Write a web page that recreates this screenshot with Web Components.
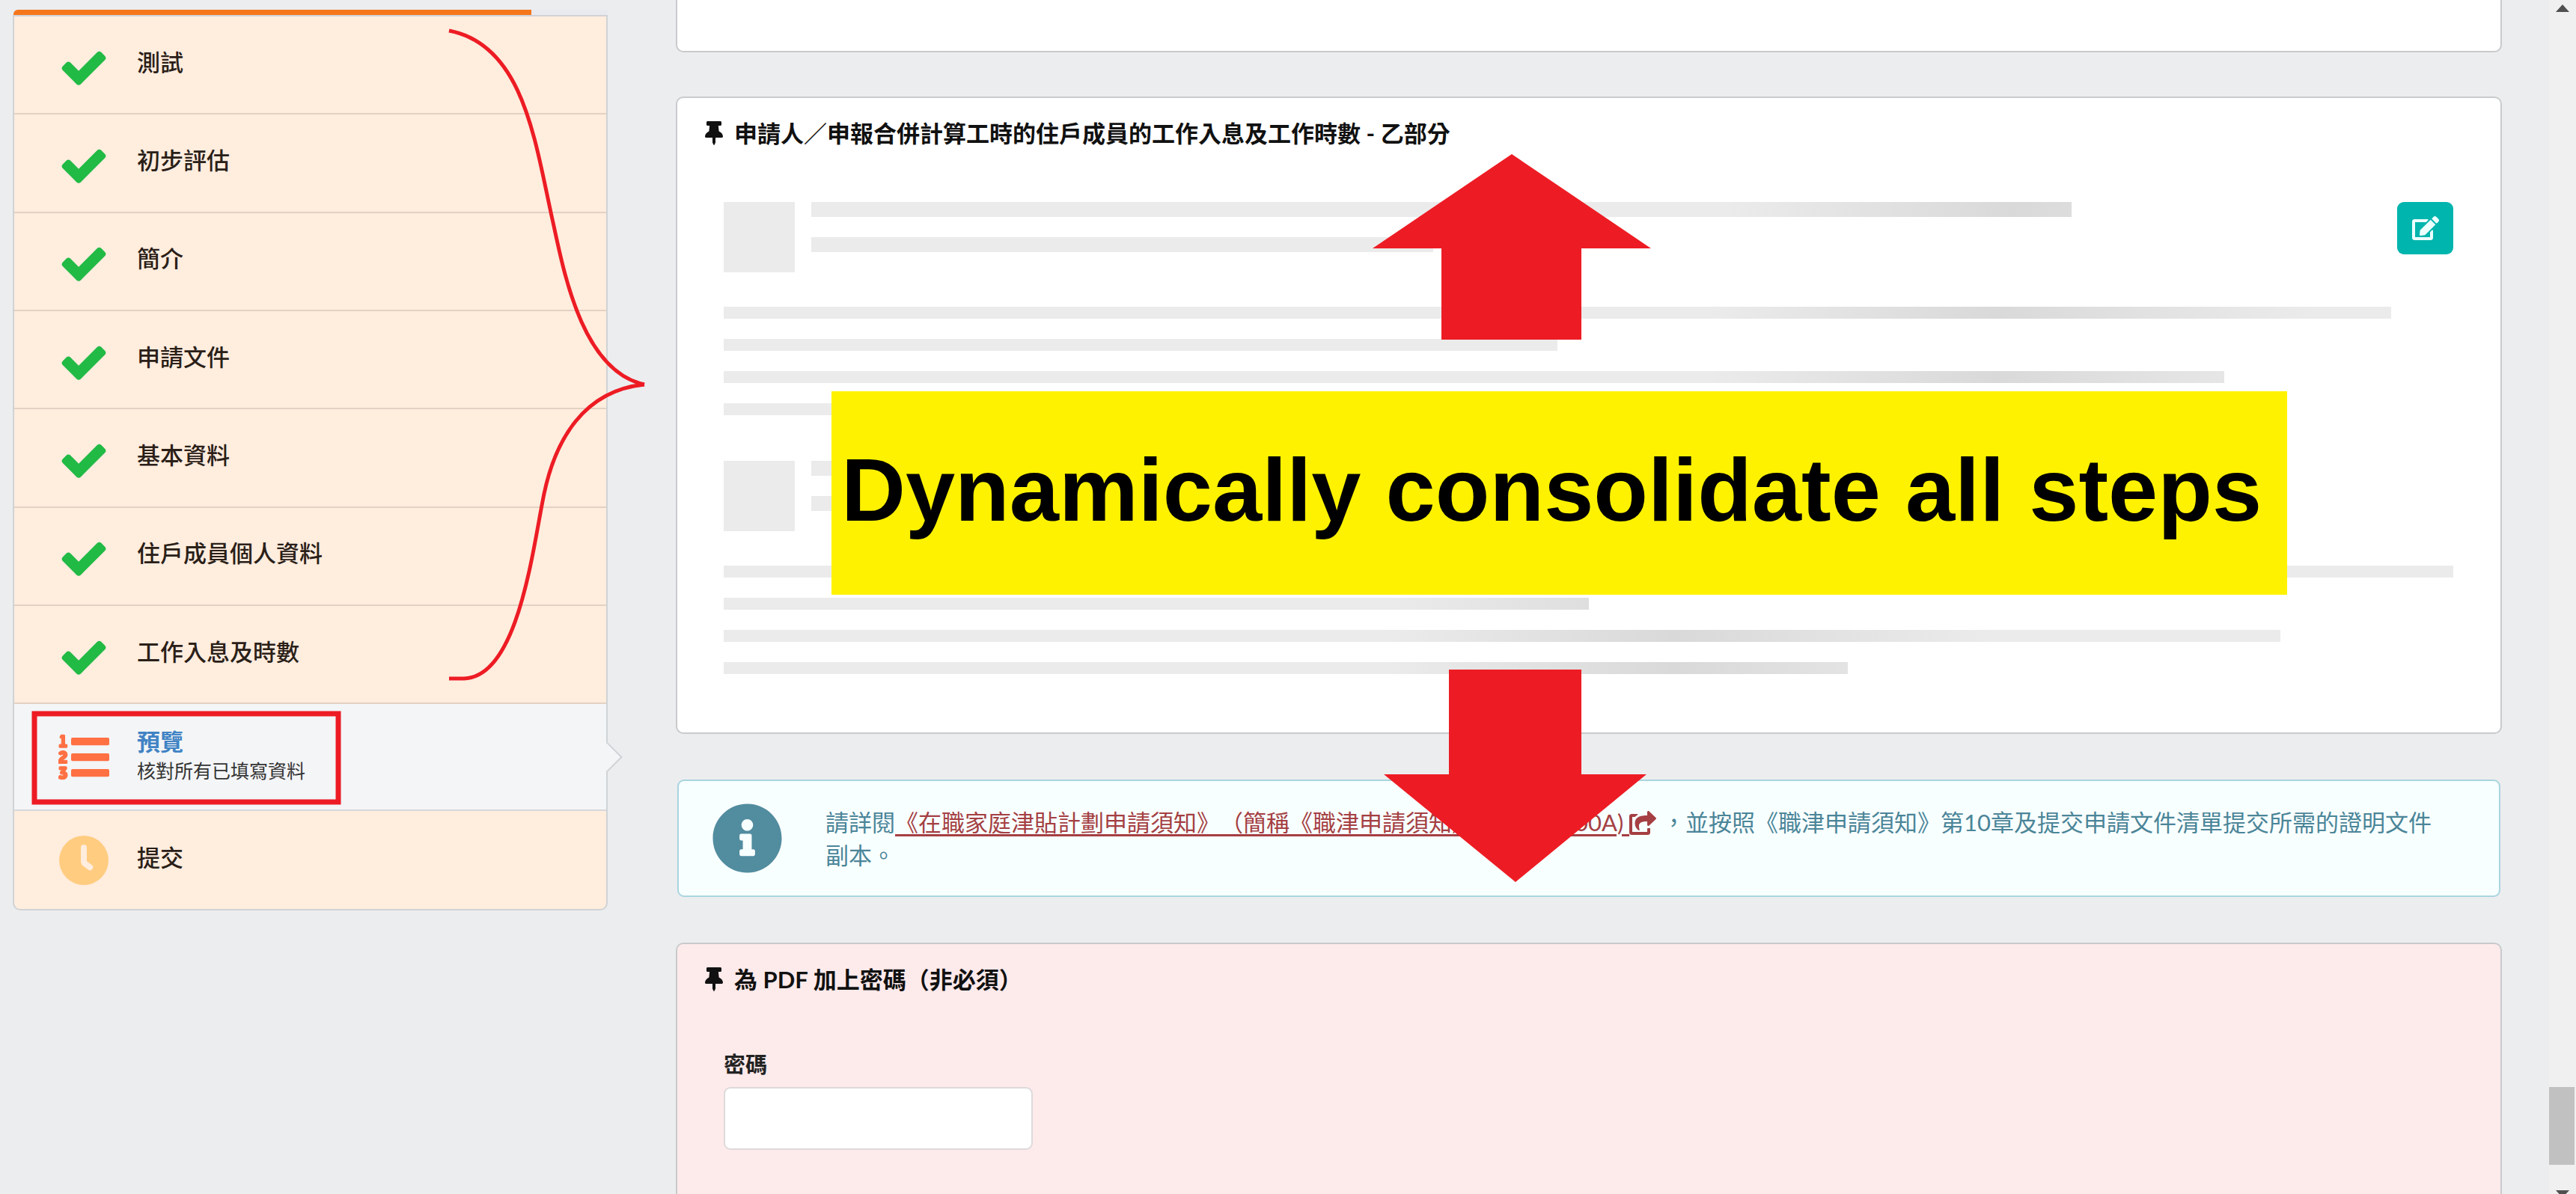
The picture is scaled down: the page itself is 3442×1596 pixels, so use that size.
<!DOCTYPE html>
<html lang="zh-Hant">
<head>
<meta charset="utf-8">
<title>預覽</title>
<style>
  body { margin: 0; background: #ecedef; color: #1b1c1d; font: 31px/44px Lato, "Noto Sans CJK TC", sans-serif; text-spacing-trim: space-all; }
</style>
</head>
<body>
<wfa-page>
  <wfa-progress slot="side"></wfa-progress>
  <wfa-steps slot="side">
    <wfa-step icon="check">測試</wfa-step>
    <wfa-step icon="check">初步評估</wfa-step>
    <wfa-step icon="check">簡介</wfa-step>
    <wfa-step icon="check">申請文件</wfa-step>
    <wfa-step icon="check">基本資料</wfa-step>
    <wfa-step icon="check">住戶成員個人資料</wfa-step>
    <wfa-step icon="check">工作入息及時數</wfa-step>
    <wfa-step icon="list" active>預覽<span slot="description">核對所有已填寫資料</span></wfa-step>
    <wfa-step icon="clock">提交</wfa-step>
  </wfa-steps>

  <wfa-card class="tail"></wfa-card>
  <wfa-card>
    <span slot="title">申請人／申報合併計算工時的住戶成員的工作入息及工作時數 - 乙部分</span>
    <wfa-row>
      <wfa-skeleton style="--glow: 1700px"></wfa-skeleton>
      <wfa-edit slot="action"></wfa-edit>
    </wfa-row>
    <wfa-skeleton style="--glow: 1270px"></wfa-skeleton>
  </wfa-card>
  <wfa-notice></wfa-notice>
  <wfa-card class="rose">
    <span slot="title">為 PDF 加上密碼（非必須）</span>
    <wfa-field></wfa-field>
  </wfa-card>

  <wfa-scrollbar slot="scroll"></wfa-scrollbar>
  <wfa-markup slot="overlay">Dynamically consolidate all steps</wfa-markup>
</wfa-page>

<script>
const ICONS = {
  check: ['0 0 1792 1792', '<path d="M1671 566q0 40-28 68l-724 724-136 136q-28 28-68 28t-68-28l-136-136-362-362q-28-28-28-68t28-68l136-136q28-28 68-28t68 28l294 295 656-657q28-28 68-28t68 28l136 136q28 28 28 68z"/>'],
  list: ['0 0 512 512', '<rect x="128" y="61" width="384" height="76" rx="14"/><rect x="128" y="219" width="384" height="76" rx="14"/><rect x="128" y="377" width="384" height="76" rx="14"/><path stroke="currentColor" stroke-width="8" d="M61.77 401l17.5-20.15a19.92 19.92 0 0 0 5.07-14.19v-3.31C84.34 356 80.5 352 73 352H16a8 8 0 0 0-8 8v16a8 8 0 0 0 8 8h22.83a157.41 157.41 0 0 0-11 12.31l-5.61 7c-4 5.07-5.25 10.13-2.8 14.88l1.05 1.93c3 5.76 6.29 7.88 12.25 7.88h4.73c10.33 0 15.94 2.44 15.94 9.09 0 4.72-4.2 8.22-14.36 8.22a41.54 41.54 0 0 1-15.47-3.12c-6.49-3.88-11.74-3.5-15.6 3.12l-5.59 9.31c-3.72 6.13-3.19 11.72 2.63 15.94 7.71 4.69 20.38 9.44 37 9.44 34.16 0 48.5-22.75 48.5-44.12-.03-14.38-9.12-29.76-28.73-34.88zM16 160h64a8 8 0 0 0 8-8v-16a8 8 0 0 0-8-8H64V40a8 8 0 0 0-8-8H32a8 8 0 0 0-7.14 4.42l-8 16A8 8 0 0 0 24 64h8v64H16a8 8 0 0 0-8 8v16a8 8 0 0 0 8 8zm-3.91 160H80a8 8 0 0 0 8-8v-16a8 8 0 0 0-8-8H41.32c3.29-10.29 48.34-18.68 48.34-56.44 0-29.06-25-39.56-44.47-39.56-21.36 0-33.8 10-40.46 18.75-4.37 5.59-3 10.84 2.8 15.37l8.58 6.88c5.61 4.56 11 2.47 16.12-2.44a13.44 13.44 0 0 1 9.46-3.84c3.33 0 9.28 1.56 9.28 8.75C51 248.19 0 257.31 0 304.59v4C0 316 5.08 320 12.09 320z"/>'],
  clock: ['0 0 512 512', '<circle cx="256" cy="256" r="248"/><path d="M256 128v136q0 16 12 26l50 36" fill="none" stroke="#ffedde" stroke-width="60" stroke-linecap="round" stroke-linejoin="round"/>'],
  pin: ['0 0 384 512', '<path d="M298.028 214.267L285.793 96H328c13.255 0 24-10.745 24-24V24c0-13.255-10.745-24-24-24H56C42.745 0 32 10.745 32 24v48c0 13.255 10.745 24 24 24h42.207L85.972 214.267C37.465 236.82 0 277.261 0 328c0 13.255 10.745 24 24 24h136v104.007c0 1.242.289 2.467.845 3.578l24 48c2.941 5.882 11.364 5.893 14.311 0l24-48a8.008 8.008 0 0 0 .845-3.578V352h136c13.255 0 24-10.745 24-24-.001-51.029-37.983-91.33-85.973-113.733z"/>'],
  edit: ['0 0 576 512', '<path d="M402.6 83.2l90.2 90.2c3.8 3.8 3.8 10 0 13.8L274.4 405.6l-92.8 10.3c-12.4 1.4-22.9-9.1-21.5-21.5l10.3-92.8L388.8 83.2c3.8-3.8 10-3.8 13.8 0zm162-22.9l-48.8-48.8c-15.2-15.2-39.9-15.2-55.2 0l-35.4 35.4c-3.8 3.8-3.8 10 0 13.8l90.2 90.2c3.8 3.8 10 3.8 13.8 0l35.4-35.4c15.2-15.3 15.2-40 0-55.2zM384 346.2V448H64V128h229.8c3.2 0 6.2-1.3 8.5-3.5l40-40c7.6-7.6 2.2-20.5-8.5-20.5H48C21.5 64 0 85.5 0 112v352c0 26.5 21.5 48 48 48h352c26.5 0 48-21.5 48-48V306.2c0-10.7-12.9-16-20.5-8.5l-40 40c-2.2 2.3-3.5 5.3-3.5 8.5z"/>'],
  info: ['0 0 512 512', '<path d="M256 8C119.043 8 8 119.083 8 256c0 136.997 111.043 248 248 248s248-111.003 248-248C504 119.083 392.957 8 256 8zm0 110c23.196 0 42 18.804 42 42s-18.804 42-42 42-42-18.804-42-42 18.804-42 42-42zm56 254c0 6.627-5.373 12-12 12h-88c-6.627 0-12-5.373-12-12v-24c0-6.627 5.373-12 12-12h12v-64h-12c-6.627 0-12-5.373-12-12v-24c0-6.627 5.373-12 12-12h64c6.627 0 12 5.373 12 12v100h12c6.627 0 12 5.373 12 12v24z"/>'],
  share: ['0 0 576 512', '<path d="M568.482 177.448L424.479 313.433C409.3 327.768 384 317.14 384 295.985v-71.963c-144.575.97-205.566 35.113-164.775 171.353 4.483 14.973-12.846 26.567-25.006 17.33C155.252 383.105 120 326.488 120 269.339c0-143.937 117.599-172.5 264-173.312V24.012c0-21.174 25.317-31.768 40.479-17.448l144.003 135.988c10.02 9.463 10.028 25.425 0 34.896zM384 379.128V448H64V128h50.916a11.99 11.99 0 0 0 8.648-3.693c14.953-15.568 32.237-27.89 51.014-37.676C185.708 80.83 181.584 64 169.033 64H48C21.49 64 0 85.49 0 112v352c0 26.51 21.49 48 48 48h352c26.51 0 48-21.49 48-48v-88.806c0-8.288-8.197-14.066-16.011-11.302a71.83 71.83 0 0 1-34.189 3.377c-7.27-1.046-13.8 4.514-13.8 11.859z"/>']
};
const icon = name => `<svg class="icon" viewBox="${ICONS[name][0]}" fill="currentColor" aria-hidden="true">${ICONS[name][1]}</svg>`;

function component(name, render) {
  customElements.define(name, class extends HTMLElement {
    constructor() {
      super();
      this.attachShadow({ mode: 'open' });
    }
    connectedCallback() {
      this.shadowRoot.innerHTML = '<style>*{box-sizing:border-box}.icon{display:block;flex:none}</style>' + render(this);
    }
  });
}

component('wfa-page', () => `
  <style>
    :host { display: flex; position: relative; height: 100vh; overflow: hidden; }
    .columns { flex: 1; min-width: 0; display: grid; grid-template-columns: minmax(0, 795fr) minmax(0, 2436fr); gap: 93px; padding: 0 65px 0 17px; }
    aside { padding-top: 13px; }
    main { display: flex; flex-direction: column; gap: 63px; }
  </style>
  <div class="columns">
    <aside><slot name="side"></slot></aside>
    <main><slot></slot></main>
  </div>
  <slot name="scroll"></slot>
  <slot name="overlay"></slot>`);

component('wfa-progress', () => `
  <style>
    :host { display: block; height: 7px; background: #e9eaf0; border-radius: 6px 0 0 0; }
    .bar { width: 87%; height: 100%; background: #f5761a; border-radius: 6px 0 0 0; margin-left: 1px; }
  </style>
  <div class="bar"></div>`);

component('wfa-steps', () => `
  <style>
    :host { display: grid; grid-template-rows: repeat(7, minmax(0, 921fr)) minmax(0, 1001fr) minmax(0, 917fr); height: 1197px;
      border: 2px solid #d0d3d6; border-radius: 0 0 10px 10px; background: #ffedde; box-sizing: border-box; }
  </style>
  <slot></slot>`);

component('wfa-step', host => `
  <style>
    :host { display: flex; position: relative; align-items: center; gap: 37px; padding-left: 59px; border-bottom: 2px solid #e3d2c3;
      box-sizing: border-box; font-weight: 500; line-height: 36px; color: #2a2018; }
    :host(:last-child) { border-bottom: 0; border-radius: 0 0 8px 8px; }
    :host([active]) { background: #f3f5f7; border-color: #d6d8da; }
    :host([active]) .title { color: #4183c4; font-weight: 700; }
    :host([active])::after { content: ""; position: absolute; right: -16px; top: 50%; width: 28px; height: 28px; margin-top: -14px;
      box-sizing: border-box; background: #f3f5f7; border: solid #d0d3d6; border-width: 2px 2px 0 0; transform: rotate(45deg); }
    .icon { width: 68px; height: 68px; }
    .check { color: #21ba45; padding-top: 6px; }
    .list { color: #ff7043; }
    .clock { color: #ffcc80; }
    .text { padding-bottom: 8px; }
    :host([active]) .text { padding-bottom: 0; }
    ::slotted([slot=description]) { display: block; font-size: 25px; font-weight: 400; line-height: 42px; color: #333; }
  </style>
  <div class="${host.getAttribute('icon')}">${icon(host.getAttribute('icon'))}</div>
  <div class="text"><div class="title"><slot></slot></div><slot name="description"></slot></div>`);

component('wfa-card', host => `
  <style>
    :host { display: block; padding: 0 63px 0 62px; background: #fff; border-radius: 8px; box-shadow: 0 0 0 2px #c8cacc; }
    :host(.tail) { height: 68px; box-sizing: border-box; border-radius: 0 0 8px 8px; }
    :host(.rose) { flex: 1; background: #fdeaeb; margin-bottom: -20px; }
    h2 { display: flex; align-items: center; gap: 15px; margin: 0 -25px; padding-top: 25px; font: inherit; font-weight: 700; line-height: 44px; color: #111; }
    .icon { width: 24px; height: 32px; }
    .body { display: flex; flex-direction: column; gap: 61px; padding: 70px 0 78px; }
  </style>
  ${host.classList.contains('tail') ? '' : `<h2>${icon('pin')}<span><slot name="title"></slot></span></h2><div class="body"><slot></slot></div>`}`);

component('wfa-row', () => `
  <style>
    :host { display: flex; align-items: flex-start; gap: 8px; }
    .grow { flex: 1; min-width: 0; }
  </style>
  <div class="grow"><slot></slot></div>
  <slot name="action"></slot>`);

component('wfa-skeleton', () => `
  <style>
    :host { display: flex; flex-direction: column; gap: 46px; --from: 0px; }
    .head { display: flex; }
    .avatar { width: 95px; height: 94px; background: #ebebeb; }
    .lines { flex: 1; min-width: 0; display: flex; flex-direction: column; }
    .head .lines { gap: 27px; --from: 95px; }
    .body { gap: 27px; }
    .line { height: 16px; background: linear-gradient(90deg, #ebebeb calc(var(--glow) - var(--from) - 380px), #d9d9d9 calc(var(--glow) - var(--from)), #ebebeb calc(var(--glow) - var(--from) + 420px)); }
    .head .line { height: 20px; border-left: 22px solid #fff; }
  </style>
  <div class="head">
    <div class="avatar"></div>
    <div class="lines"><div class="line" style="width:80%"></div><div class="line" style="width:40%"></div></div>
  </div>
  <div class="lines body">
    <div class="line"></div><div class="line" style="width:50%"></div><div class="line" style="width:90%"></div><div class="line" style="width:65%"></div>
  </div>`);

component('wfa-edit', () => `
  <style>
    :host { display: block; }
    button { display: flex; align-items: center; justify-content: center; width: 75px; height: 70px; padding: 0; border: 0; border-radius: 9px; background: #00b5ad; color: #ecffff; }
    .icon { width: 36px; height: 32px; }
  </style>
  <button type="button" aria-label="修改">${icon('edit')}</button>`);

component('wfa-notice', () => `
  <style>
    :host { display: flex; align-items: center; gap: 57px; padding: 29px 70px 29px 44px; border: 2px solid #a9d5de; border-radius: 9px; background: #f8ffff; color: #4b8598; }
    .icon { width: 95px; height: 95px; color: #528c9f; }
    p { margin: 0; flex: 1; }
    a { color: #a53f43; text-decoration: underline; text-decoration-thickness: 3px; text-underline-offset: 4px; }
    a .icon { display: inline-block; width: 36px; height: 32px; vertical-align: -5px; color: inherit; }
  </style>
  ${icon('info')}
  <p>請詳閱<a href="#">《在職家庭津貼計劃申請須知》（簡稱《職津申請須知》）(WFA 100A) ${icon('share')}</a> ，並按照《職津申請須知》第10章及提交申請文件清單提交所需的證明文件副本。</p>`);

component('wfa-field', () => `
  <style>
    :host { display: flex; flex-direction: column; align-items: flex-start; gap: 8px; }
    label { font-size: 29px; font-weight: 700; line-height: 44px; color: #222; }
    input { width: 413px; height: 84px; padding: 0 24px; border: 2px solid #dddadb; border-radius: 9px; background: #fff; font: inherit; }
  </style>
  <label for="password">密碼</label>
  <input id="password" type="password">`);

component('wfa-scrollbar', () => `
  <style>
    :host { display: flex; flex-direction: column; align-items: center; width: 36px; background: #f0f0f0; }
    svg { display: block; width: 18px; height: 10px; margin: 6px 0; flex: none; }
    .track { flex: 1; width: 100%; display: flex; flex-direction: column; justify-content: flex-end; padding: 0 2px 34px 0; box-sizing: border-box; }
    .thumb { height: 104px; background: #c1c1c1; }
    .down { margin: 0 0 -5px; }
  </style>
  <svg viewBox="0 0 18 10"><path d="M0 10L9 0l9 10z" fill="#505050"/></svg>
  <div class="track"><div class="thumb"></div></div>
  <svg class="down" viewBox="0 0 18 10"><path d="M0 0h18L9 10z" fill="#505050"/></svg>`);

component('wfa-markup', () => `
  <style>
    :host { position: absolute; inset: 0; pointer-events: none; }
    svg { position: absolute; inset: 0; width: 100%; height: 100%; }
    .callout { position: absolute; left: 1111px; top: 523px; width: 1945px; height: 272px; display: flex; align-items: center; padding: 0 0 8px 13px; box-sizing: border-box;
      background: #fff200; color: #000; font: bold 119px/144px "Liberation Sans", sans-serif; white-space: nowrap; }
  </style>
  <div class="callout"><span><slot></slot></span></div>
  <svg viewBox="0 0 3442 1596" aria-hidden="true">
    <g fill="none" stroke="#ed1c24" stroke-width="5">
      <path d="M600 41C700 60 715 190 738 293C752 355 775 495 861 514"/>
      <path d="M861 514C780 522 742 588 727 660C712 732 693 905 620 907H600"/>
      <rect x="46" y="954" width="406" height="118" stroke-width="7"/>
    </g>
    <path fill="#ed1c24" d="M2020 206l186 126h-93v122h-187V332h-92zM1936 895h177v140h87l-175 144-176-144h87z"/>
  </svg>`);
</script>
</body>
</html>
